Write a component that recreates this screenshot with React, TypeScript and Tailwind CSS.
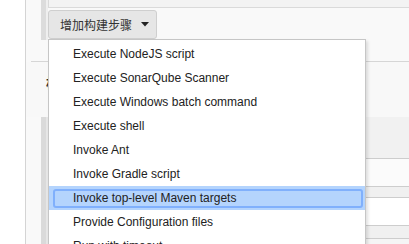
import React from 'react';

const steps = [
  'Execute NodeJS script',
  'Execute SonarQube Scanner',
  'Execute Windows batch command',
  'Execute shell',
  'Invoke Ant',
  'Invoke Gradle script',
  'Invoke top-level Maven targets',
  'Provide Configuration files',
  'Run with timeout',
];

export default function App() {
  const active = 'Invoke top-level Maven targets';

  return (
    <div className="relative w-[409px] h-[244px] overflow-hidden bg-white flex font-['Liberation_Sans','Noto_Sans_CJK_SC',sans-serif] text-[#333]">
      {/* left gutter */}
      <div className="w-[26px] shrink-0 bg-white border-r border-[#d4d4d4]" />

      {/* config page behind */}
      <div className="flex-1 bg-[#f9f9f9] flex flex-col">
        <div className="ml-[5px] h-[62px] border-b border-[#d6d6d6] flex pl-[10px]">
          <div className="w-[7px] h-[40px] border-l-[5px] border-[#dcdcdc] bg-[#efefef]" />
          <div className="flex-1 flex flex-col">
            <div className="h-[8px] bg-[#f3f3f3] border-b border-l border-[#dadada]" />
            <div className="mt-[2px] w-[109px] h-[29px] rounded-[3px] border border-[#cfcfcf] bg-[#e6e6e6] flex items-center pl-[11px] gap-[9px]">
              <span className="text-[12px] leading-none font-['Noto_Sans_CJK_SC',sans-serif] text-[#333]">增加构建步骤</span>
              <svg width="8" height="5" viewBox="0 0 8 5">
                <path d="M0 0h8L4 4.5z" fill="#222" />
              </svg>
            </div>
          </div>
        </div>

        <div className="h-[55px] bg-[#f8f8f8] pl-[20px] pt-[9px]">
          <span className="text-[14px] font-bold font-['Noto_Sans_CJK_SC',sans-serif] text-[#333]">构建后操作</span>
        </div>

        <div className="flex-1 flex pl-[15px] bg-[#f9f9f9]">
          <div className="w-[7px] border-l-[5px] border-[#dadada] bg-[#e6e6e6]" />
          <div className="flex-1 flex flex-col">
            <div className="h-[42px] bg-[#f1f1f1] border-b border-[#cdcdcd]" />
            <div className="h-[28px] bg-[#fbfbfb] border-b border-[#cdcdcd]" />
            <div className="h-[11px] bg-[#f0f0f0] border-b border-[#cdcdcd]" />
            <div className="h-[28px] bg-white border-b border-[#cdcdcd]" />
            <div className="h-[13px] bg-[#f0f0f0] border-b border-[#cdcdcd]" />
            <div className="flex-1 bg-[#f5f5f5]" />
          </div>
        </div>
      </div>

      {/* dropdown menu */}
      <div className="absolute left-[48px] top-[39px] w-[318px] bg-white border border-[#c6c6c6] shadow-[2px_2px_3px_rgba(0,0,0,0.12)] pt-[2px]">
        {steps.map((s) =>
          s === active ? (
            <div key={s} className="h-[24px] bg-[#b4d4fd] pt-[3px] pb-[2px] pl-[4px] pr-[2px]">
              <div className="h-[19px] border-2 border-[#80b0fc] rounded-[3px] pl-[18px] text-[12px] leading-[15px] text-[#222]">
                {s}
              </div>
            </div>
          ) : (
            <div key={s} className="h-[24px] pl-[24px] text-[12px] leading-[24px] text-[#222]">
              {s}
            </div>
          )
        )}
      </div>
    </div>
  );
}
